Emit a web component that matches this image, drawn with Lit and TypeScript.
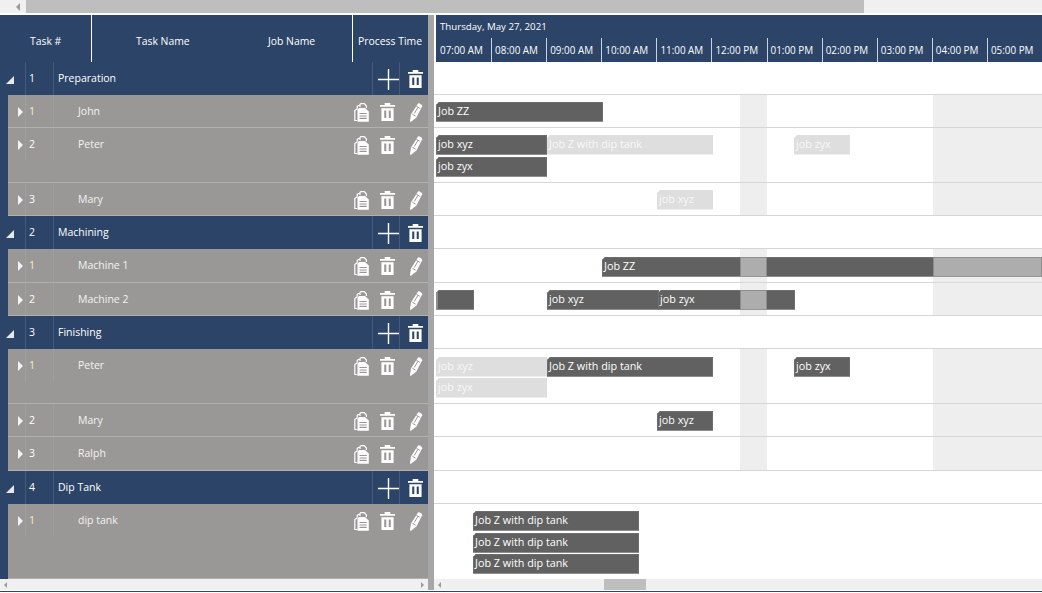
import { LitElement, html, css, svg } from "lit";
import { customElement } from "lit/decorators.js";

type Bar = { x: number; w: number; y: number; t?: string; light?: boolean; breaks?: [number, number][] };
type Row = { kind: "g" | "c"; h: number; n: string; name: string; bars?: Bar[]; bands?: boolean; first?: boolean };

const rows: Row[] = [
  { kind: "g", h: 33, n: "1", name: "Preparation" },
  { kind: "c", h: 33, n: "1", name: "John", first: true, bands: true, bars: [{ x: 436, w: 167, y: 7, t: "Job ZZ" }] },
  { kind: "c", h: 55, n: "2", name: "Peter", bands: true, bars: [
    { x: 547, w: 166, y: 7, t: "Job Z with dip tank", light: true },
    { x: 436, w: 111, y: 7, t: "job xyz" },
    { x: 436, w: 111, y: 29, t: "job zyx" },
    { x: 794, w: 56, y: 7, t: "job zyx", light: true },
  ] },
  { kind: "c", h: 33, n: "3", name: "Mary", bands: true, bars: [{ x: 657, w: 56, y: 7, t: "job xyz", light: true }] },
  { kind: "g", h: 33, n: "2", name: "Machining" },
  { kind: "c", h: 34, n: "1", name: "Machine 1", first: true, bands: true, bars: [
    { x: 602, w: 440, y: 8, t: "Job ZZ", breaks: [[138, 27], [331, 109]] },
  ] },
  { kind: "c", h: 33, n: "2", name: "Machine 2", bands: true, bars: [
    { x: 436, w: 38, y: 7, breaks: [[0, 2]] },
    { x: 547, w: 112, y: 7, t: "job xyz" },
    { x: 658, w: 137, y: 7, t: "job zyx", breaks: [[82, 27]] },
  ] },
  { kind: "g", h: 33, n: "3", name: "Finishing" },
  { kind: "c", h: 55, n: "1", name: "Peter", first: true, bands: true, bars: [
    { x: 436, w: 111, y: 8, t: "job xyz", light: true },
    { x: 436, w: 111, y: 29, t: "job zyx", light: true },
    { x: 547, w: 166, y: 8, t: "Job Z with dip tank" },
    { x: 794, w: 56, y: 8, t: "job zyx" },
  ] },
  { kind: "c", h: 33, n: "2", name: "Mary", bands: true, bars: [{ x: 657, w: 56, y: 7, t: "job xyz" }] },
  { kind: "c", h: 34, n: "3", name: "Ralph", bands: true },
  { kind: "g", h: 33, n: "4", name: "Dip Tank" },
  { kind: "c", h: 75, n: "1", name: "dip tank", first: true, bars: [
    { x: 473, w: 166, y: 7, t: "Job Z with dip tank" },
    { x: 473, w: 166, y: 29, t: "Job Z with dip tank" },
    { x: 473, w: 166, y: 50, t: "Job Z with dip tank" },
  ] },
];

const hours = ["07:00 AM", "08:00 AM", "09:00 AM", "10:00 AM", "11:00 AM", "12:00 PM", "01:00 PM", "02:00 PM", "03:00 PM", "04:00 PM", "05:00 PM"];

const trash = svg`<svg class="ic" width="15" height="18" viewBox="0 0 16 19"><path fill="#fff" fill-rule="evenodd" d="M5 0h6v2h5v2H0V2h5zM1.500 5.500h13V19h-13zM4.500 8v8h2.200V8zM9.300 8v8h2.200V8z"/></svg>`;
const plus = svg`<svg class="ic" width="21" height="21" viewBox="0 0 21 21"><path fill="#fff" d="M9.800 0h1.400v9.800H21v1.400h-9.800V21H9.800v-9.800H0V9.800h9.800z"/></svg>`;
const pencil = svg`<svg class="ic" width="14" height="19" viewBox="0 0 14 19"><path fill="#fff" d="M9 .6c1-.9 4.300 1 4.200 2.600L7.400 14.600 2.400 18.600c-.7.500-1.500.1-1.400-.8L2 11.600z"/><path fill="none" stroke="#9a9896" stroke-width="1" d="M3.400 11.300l3.200 1.800M7.400 3.400l3.400 1.900M5.300 10.500L8.800 4.500"/></svg>`;
const clip = svg`<svg class="ic" width="15" height="19" viewBox="0 0 15 19"><path fill="none" stroke="#fff" stroke-width="1.200" d="M6 4V1.400L7 .6h3.300L12.400 3v2M3.200 5.800V3.500L4.200 2.500H6M3.200 5.800L.8 7.500V17.500H3.500"/><path fill="#fff" d="M5 5h6l3.800 3.600V18.800H3.500V6.600z"/><path fill="#9a9896" d="M5.500 10h7.200v1.100H5.500zM5.500 12.400h7.200v1.100H5.500zM5.500 14.800h7.200v1.100H5.500z"/></svg>`;

@customElement("app-root")
export class AppRoot extends LitElement {
  static styles = css`
    :host {
      display: block;
      width: 1042px;
      height: 593px;
      overflow: hidden;
      background: #fff;
      font-family: "Open Sans", "Noto Sans", sans-serif;
      font-size: 10.500px;
      color: #fff;
    }
    .topbar {
      height: 13px;
      background: #f0f0f0;
      display: flex;
      padding-left: 10px;
      align-items: stretch;
    }
    .arr {
      width: 16px;
      display: flex;
      align-items: center;
      justify-content: center;
    }
    .thumb { background: #bebebe; }
    .topbar .thumb { width: 838px; }
    .gap { height: 2px; }
    .main {
      display: grid;
      grid-template-columns: 428px 6px 608px;
      height: 575px;
    }
    .left { background: #2c4468; display: flex; flex-direction: column; }
    .split { background: #a6a6a6; }
    .right { display: flex; flex-direction: column; overflow: hidden; position: relative; }

    .lhead {
      height: 47px;
      display: grid;
      grid-template-columns: 92px 261px 75px;
      box-sizing: border-box;
      font-size: 10.400px;
    }
    .lhead > div {
      display: flex;
      align-items: center;
      padding-top: 4px;
      box-sizing: border-box;
      white-space: nowrap;
    }
    .lhead .c1 { padding-left: 30px; border-right: 1px solid #fff; }
    .lhead .c2 { padding-left: 44px; border-right: 1px solid #fff; }
    .lhead .c2 span:first-child { width: 132px; }
    .lhead .c3 { padding-left: 5px; }

    .row {
      display: grid;
      grid-template-columns: 26px 28px 292px 27px 27px 28px;
      box-sizing: border-box;
      overflow: hidden;
    }
    .row > div {
      height: 33px;
      display: flex;
      align-items: center;
      box-sizing: border-box;
    }
    .row.g > div:nth-child(1),
    .row.g > div:nth-child(2) { border-right: 1px solid #46597a; }
    .row.g > div:nth-child(4),
    .row.g > div:nth-child(5) { border-right: 1px solid #46597a; }
    .row.g .spacer { border-left: 0; }
    .row.c {
      margin-left: 8px;
      grid-template-columns: 18px 28px 292px 27px 27px 28px;
      background: #9a9896;
      border-bottom: 1px solid #b3b1af;
    }
    .row.c:last-of-type { border-bottom: none; }
    .row.c > div:nth-child(-n+2) { border-right: 1px solid #a19f9d; }
    .txt { padding-bottom: 2px; }
    .num { padding-left: 3px; }
    .first { color: #f6f2c0; }
    .gname { padding-left: 4px; }
    .cname { padding-left: 24px; color: #f2f2f2; }
    .ctr { justify-content: center; padding-top: 1px; }
    .clipcell { padding-left: 3px; }
    .trashcell { padding-left: 2px; }
    .pencell { padding-left: 3px; }
    .pluscell { padding-left: 4px; padding-top: 1px; }
    .gtrash { padding-left: 2px; padding-top: 0; }
    .ic { display: block; }
    .tg { width: 0; height: 0; margin-left: 6px; margin-top: 2px; border-style: solid; border-width: 0 0 8px 8px; border-color: transparent transparent #e6e8ec transparent; }
    .tc { width: 0; height: 0; margin-left: 10px; margin-top: 1px; border-style: solid; border-width: 5px 0 5px 5px; border-color: transparent transparent transparent #f4f4f4; }

    .lscroll, .rscroll {
      height: 11px;
      background: #f0f0f0;
      display: flex;
      align-items: center;
      justify-content: space-between;
      flex: none;
    }
    .rscroll { position: relative; }
    .tinyl { width: 0; height: 0; margin: 0 4px; border-style: solid; border-width: 3px 3px 3px 0; border-color: transparent #9a9a9a transparent transparent; }
    .tinyr { width: 0; height: 0; margin: 0 4px; border-style: solid; border-width: 3px 0 3px 3px; border-color: transparent transparent transparent #9a9a9a; }
    .bigl { border-width: 4px 4px 4px 0; }
    .rthumb { position: absolute; left: 170px; width: 42px; top: 0; bottom: 0; }
    .fill { flex: 1; }

    .rhead {
      height: 47px;
      background: #2c4468;
      margin-left: 2px;
      display: flex;
      flex-direction: column;
      flex: none;
    }
    .date { height: 23px; padding: 0 0 0 4px; box-sizing: border-box; display: flex; align-items: center; font-size: 9.700px; }
    .hours { display: flex; height: 24px; padding-left: 1px; }
    .hr {
      width: 55.100px;
      flex: none;
      box-sizing: border-box;
      padding-left: 3px;
      border-right: 1px solid #cdd3dc;
      display: flex;
      align-items: center;
      font-size: 9.900px;
      white-space: nowrap;
    }
    .grow {
      position: relative;
      box-sizing: border-box;
      border-bottom: 1px solid #d6d6d6;
      flex: none;
      overflow: hidden;
    }
    .grow.last { border-bottom: none; }
    .band { position: absolute; top: 0; bottom: 0; background: #eeeeee; }
    .b1 { left: 305.500px; width: 27.500px; }
    .b2 { left: 499px; width: 109px; }
    .bar {
      position: absolute;
      height: 19.500px;
      background: #616161;
      box-shadow: inset 0 0 0 1px #6e6e6e;
      clip-path: polygon(3px 0, 100% 0, 100% 100%, 0 100%, 0 3px);
      line-height: 17px;
      font-size: 10.800px;
      padding-left: 2px;
      box-sizing: border-box;
      white-space: nowrap;
      overflow: hidden;
    }
    .bar.light { background: #dedede; box-shadow: none; color: #f8f8f8; }
    .brk { position: absolute; top: 0; bottom: 0; background: #adadad; box-shadow: inset 0 0 0 1px #8d8d8d; }
    .bar span { position: relative; }
    .baseline { height: 1px; margin-top: 1px; background: #2c4468; }
  `;

  private leftRow(r: Row) {
    if (r.kind === "g") {
      return html`<div class="row g" style="height:${r.h}px">
        <div><span class="tg"></span></div>
        <div class="num txt">${r.n}</div>
        <div class="gname txt">${r.name}</div>
        <div></div>
        <div class="ctr pluscell">${plus}</div>
        <div class="ctr gtrash">${trash}</div>
      </div>`;
    }
    return html`<div class="row c" style="height:${r.h}px">
      <div><span class="tc"></span></div>
      <div class="num txt ${r.first ? "first" : ""}">${r.n}</div>
      <div class="cname txt">${r.name}</div>
      <div class="ctr clipcell">${clip}</div>
      <div class="ctr trashcell">${trash}</div>
      <div class="ctr pencell">${pencil}</div>
    </div>`;
  }

  private rightRow(r: Row, i: number) {
    return html`<div class="grow ${i === rows.length - 1 ? "last" : ""}" style="height:${r.h}px">
      ${r.bands ? html`<div class="band b1"></div><div class="band b2"></div>` : ""}
      ${(r.bars ?? []).map(
        (b) => html`<div class="bar ${b.light ? "light" : ""}" style="left:${b.x - 434}px;width:${b.w}px;top:${b.y}px">
          ${(b.breaks ?? []).map(([x, w]) => html`<div class="brk" style="left:${x}px;width:${w}px"></div>`)}
          ${b.t ? html`<span>${b.t}</span>` : ""}
        </div>`
      )}
    </div>`;
  }

  render() {
    return html`
      <div class="topbar">
        <div class="arr"><span class="tinyl bigl"></span></div>
        <div class="thumb"></div>
      </div>
      <div class="gap"></div>
      <div class="main">
        <div class="left">
          <div class="lhead">
            <div class="c1">Task #</div>
            <div class="c2"><span>Task Name</span><span>Job Name</span></div>
            <div class="c3">Process Time</div>
          </div>
          ${rows.map((r) => this.leftRow(r))}
          <div class="fill"></div>
          <div class="lscroll"><span class="tinyl"></span><span class="tinyr"></span></div>
        </div>
        <div class="split"></div>
        <div class="right">
          <div class="rhead">
            <div class="date">Thursday, May 27, 2021</div>
            <div class="hours">${hours.map((h) => html`<div class="hr">${h}</div>`)}</div>
          </div>
          ${rows.map((r, i) => this.rightRow(r, i))}
          <div class="fill"></div>
          <div class="rscroll"><span class="tinyl"></span><div class="thumb rthumb"></div></div>
        </div>
      </div>
      <div class="baseline"></div>
    `;
  }
}
